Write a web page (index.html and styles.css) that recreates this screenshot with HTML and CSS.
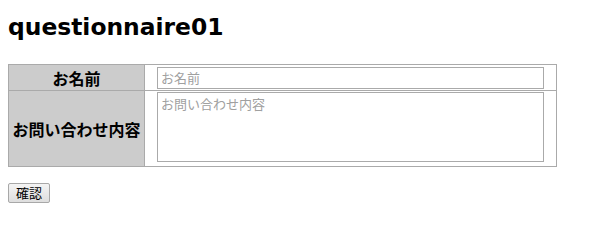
FILE: index.html
```html
<!DOCTYPE html>
<html lang="ja">
<head>
<meta charset="utf-8">
<title>questionnaire01</title>
<link rel="stylesheet" href="styles.css">
</head>
<body>
<h1 class="title">questionnaire01</h1>
<form class="form">
  <table class="qtable">
    <tr class="row-name">
      <th class="label">お名前</th>
      <td class="field"><input class="input" type="text" placeholder="お名前"></td>
    </tr>
    <tr class="row-body">
      <th class="label">お問い合わせ内容</th>
      <td class="field field-top"><textarea class="textarea" placeholder="お問い合わせ内容"></textarea></td>
    </tr>
  </table>
  <div class="actions"><button class="btn" type="button">確認</button></div>
</form>
</body>
</html>
```
FILE: styles.css
```css
html, body { margin: 0; padding: 0; background: #fff; }
body {
  padding: 8px;
  font-family: "Noto Sans CJK JP", "DejaVu Sans", sans-serif;
  color: #000;
}
.title {
  margin: 5px 0 0 0;
  height: 51px;
  font-family: "DejaVu Sans", sans-serif;
  font-weight: bold;
  font-size: 23.4px;
  line-height: 28px;
}
.form { margin: 0; }
.qtable {
  border-collapse: collapse;
  width: 549px;
  table-layout: fixed;
}
.qtable th, .qtable td {
  border: 1px solid #aaaaaa;
  padding: 0;
}
.label {
  width: 135px;
  background: #cccccc;
  font-family: "Noto Sans CJK JP", sans-serif;
  font-weight: bold;
  font-size: 16px;
  text-align: center;
  white-space: nowrap;
}
.row-name { height: 26px; }
.row-body { height: 76px; }
.field { padding: 0 12px !important; vertical-align: middle; }
.field-top { vertical-align: top; padding-top: 1px !important; }
.input, .textarea {
  display: block;
  box-sizing: border-box;
  width: 100%;
  margin: 0;
  border: 1px solid #aaaaaa;
  font-family: "Noto Sans CJK JP", sans-serif;
  font-size: 13px;
  color: #000;
  padding: 1px 3px;
  outline: none;
}
.input { height: 22px; }
.textarea { height: 70px; resize: none; }
.input::placeholder, .textarea::placeholder { color: #a0a0a0; }
.actions { margin-top: 16px; }
.btn {
  display: block;
  width: 42px;
  height: 20px;
  padding: 0;
  border: 1px solid #a8a8a8;
  border-radius: 2px;
  background: linear-gradient(#f4f4f4, #dedede);
  font-family: "Noto Sans CJK JP", sans-serif;
  font-size: 13px;
  line-height: 16px;
  color: #000;
}
```
